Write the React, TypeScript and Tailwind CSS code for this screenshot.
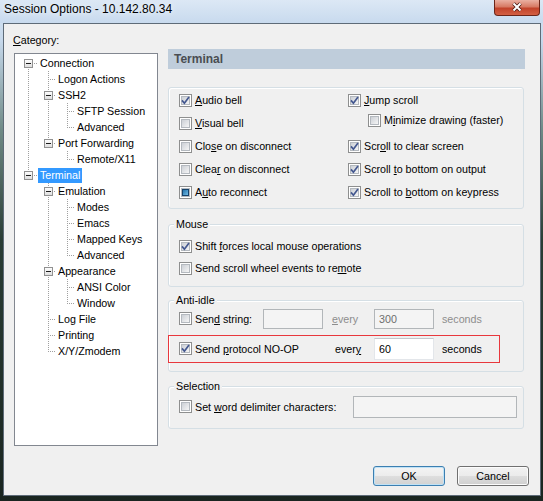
import React from 'react';

type Node = { label: string; children?: Node[] };
type Row = { label: string; depth: number; hasChildren: boolean; hasNext: boolean; first: boolean; guides: boolean[] };
type CheckState = 'on' | 'off' | 'mixed';

const tree: Node[] = [
  {
    label: 'Connection',
    children: [
      { label: 'Logon Actions' },
      { label: 'SSH2', children: [{ label: 'SFTP Session' }, { label: 'Advanced' }] },
      { label: 'Port Forwarding', children: [{ label: 'Remote/X11' }] },
    ],
  },
  {
    label: 'Terminal',
    children: [
      {
        label: 'Emulation',
        children: [{ label: 'Modes' }, { label: 'Emacs' }, { label: 'Mapped Keys' }, { label: 'Advanced' }],
      },
      { label: 'Appearance', children: [{ label: 'ANSI Color' }, { label: 'Window' }] },
      { label: 'Log File' },
      { label: 'Printing' },
      { label: 'X/Y/Zmodem' },
    ],
  },
];

const flatten = (nodes: Node[], depth: number, guides: boolean[], out: Row[]): Row[] => {
  nodes.forEach((n, i) => {
    const hasNext = i < nodes.length - 1;
    out.push({
      label: n.label,
      depth,
      hasChildren: !!n.children,
      hasNext,
      first: depth === 0 && i === 0,
      guides,
    });
    if (n.children) flatten(n.children, depth + 1, [...guides, hasNext], out);
  });
  return out;
};

const rows = flatten(tree, 0, [], []);

// connector x per depth (pixel centre inside the tree) and width of the guide column
const cx = [13.5, 33.5, 52.5];
const guideW = [23, 41, 60];

// label with an accelerator letter underlined
const acc = (s: string, i: number) => (
  <>
    {s.slice(0, i)}
    <u>{s[i]}</u>
    {s.slice(i + 1)}
  </>
);

const dot = { stroke: '#a0a0a0', strokeWidth: 1, strokeDasharray: '1 1', shapeRendering: 'crispEdges' as const };

const TreeRow = ({ row }: { row: Row }) => {
  const w = guideW[row.depth];
  const c = cx[row.depth];
  const selected = row.label === 'Terminal';
  return (
    <div className="flex h-[16px] items-center">
      <svg width={w} height={16} className="shrink-0">
        {row.guides.map((g, a) => (g ? <line key={a} x1={cx[a]} y1={0} x2={cx[a]} y2={16} {...dot} /> : null))}
        {!row.first && <line x1={c} y1={0} x2={c} y2={8} {...dot} />}
        {row.hasNext && <line x1={c} y1={8} x2={c} y2={16} {...dot} />}
        <line x1={c - 0.5} y1={8.5} x2={w} y2={8.5} {...dot} />
        {row.hasChildren && (
          <>
            <defs>
              <linearGradient id="tvBox" x1="0" y1="0" x2="0" y2="1">
                <stop offset="0" stopColor="#ffffff" />
                <stop offset="1" stopColor="#dcdcdc" />
              </linearGradient>
            </defs>
            <rect x={c - 4} y={4.5} width={8} height={8} fill="url(#tvBox)" stroke="#919191" shapeRendering="crispEdges" />
            <line x1={c - 2.5} y1={8.5} x2={c + 2.5} y2={8.5} stroke="#1c1c1c" shapeRendering="crispEdges" />
          </>
        )}
      </svg>
      <span
        className={`h-[15px] px-[2px] leading-[15px] whitespace-nowrap ${
          selected ? 'bg-[#3399ff] text-white' : 'text-black'
        }`}
      >
        {row.label}
      </span>
    </div>
  );
};

const Check = ({ state }: { state: CheckState }) => (
  <svg width="13" height="13" viewBox="0 0 13 13" className="shrink-0">
    <defs>
      <linearGradient id="cbFill" x1="0" y1="0" x2="1" y2="1">
        <stop offset="0" stopColor="#c9cdd3" />
        <stop offset="1" stopColor="#f8f8f8" />
      </linearGradient>
      <linearGradient id="cbMix" x1="0" y1="0" x2="1" y2="1">
        <stop offset="0" stopColor="#1d6aa3" />
        <stop offset="1" stopColor="#78c4ec" />
      </linearGradient>
    </defs>
    <rect x="0.5" y="0.5" width="12" height="12" fill="#fff" stroke="#8e8f8f" shapeRendering="crispEdges" />
    <rect x="2.5" y="2.5" width="8" height="8" fill="url(#cbFill)" stroke="#b4b9bf" shapeRendering="crispEdges" />
    {state === 'on' && <path d="M3 6.4 L5.4 9.2 L10 3" fill="none" stroke="#43578f" strokeWidth="1.7" />}
    {state === 'mixed' && (
      <rect x="3.5" y="3.5" width="6" height="6" fill="url(#cbMix)" stroke="#17436b" shapeRendering="crispEdges" />
    )}
  </svg>
);

const CheckItem = ({ state = 'off', children }: { state?: CheckState; children: React.ReactNode }) => (
  <div className="flex items-center gap-[3px] whitespace-nowrap">
    <Check state={state} />
    <span>{children}</span>
  </div>
);

const Field = ({ w, h, value, disabled }: { w: string; h: string; value?: string; disabled?: boolean }) => (
  <div
    className={`${w} ${h} flex shrink-0 items-center border pl-[4px] ${
      disabled
        ? 'border-[#b2b6b9] bg-[#f4f4f4] text-[#6d6d6d]'
        : 'border-[#e3e6ea] border-t-[#c4c7cc] bg-white text-black'
    }`}
  >
    {value}
  </div>
);

const Group = ({ title, className, children }: { title?: string; className?: string; children: React.ReactNode }) => (
  <div className={`rounded-[3px] border border-[#d5dfe5] shadow-[inset_1px_1px_0_#fff] ${className ?? ''}`}>
    {title && <div className="-mt-[8px] ml-[5px] h-[14px] w-fit bg-[#f0f0f0] px-[2px] leading-[14px]">{title}</div>}
    {children}
  </div>
);

const App: React.FC = () => {
  return (
    <div className="flex h-[501px] w-[543px] flex-col overflow-hidden bg-[linear-gradient(180deg,#d6e4f2_0px,#c7d9ec_40px,#6f8a86_130px,#2a3d35_240px,#1a2520_100%)] font-['Liberation_Sans',Arial,sans-serif]">
      {/* Title bar */}
      <div className="flex h-[23px] shrink-0 items-start bg-[linear-gradient(180deg,#dce8f5,#c8daee)]">
        <div className="pl-[4px] pt-[2px] text-[12px] leading-[14px] text-black [text-shadow:0_0_6px_#fff]">
          Session Options - 10.142.80.34
        </div>
        <div className="mr-[3px] ml-auto flex h-[16px] w-[46px] items-center justify-center rounded-b-[4px] border border-t-0 border-[#6b2519] bg-[linear-gradient(180deg,#eab0a2_0%,#d77a64_45%,#c2432b_55%,#d35f43_100%)] pb-[2px]">
          <svg width="12" height="10" viewBox="0 0 12 10">
            <path d="M2.5 1.5 L9.5 8.5 M9.5 1.5 L2.5 8.5" stroke="#4a1a12" strokeWidth="3.6" />
            <path d="M2.5 1.5 L9.5 8.5 M9.5 1.5 L2.5 8.5" stroke="#fff" strokeWidth="2" />
          </svg>
        </div>
      </div>

      {/* Client area */}
      <div className="mr-[2px] ml-[3px] flex h-[473px] shrink-0 flex-col border border-[#5e6b78] bg-[#f0f0f0] pt-[8px] pl-[10px] text-[10.7px] text-black">
        <div className="flex items-start">
          <div className="w-[144px] shrink-0">
            <div className="-ml-[1px] h-[16px] leading-[16px]">{acc('Category:', 0)}</div>
            <div className="mt-[5px] h-[393px] border border-[#828790] bg-white pt-[1px]">
              {rows.map((r, i) => (
                <TreeRow key={i} row={r} />
              ))}
            </div>
          </div>

          <div className="mt-[17px] ml-[10px] w-[357px]">
            <div className="flex h-[20px] items-center bg-[#bfcddb] pl-[6px] text-[12px] font-bold text-[#4a4d52]">
              Terminal
            </div>

            <Group className="mt-[18px] w-[356px] pt-[1px] pb-[4px]">
              <div className="grid grid-cols-[169px_1fr] pl-[10px] [&>div]:h-[23px]">
                <CheckItem state="on">{acc('Audio bell', 0)}</CheckItem>
                <CheckItem state="on">{acc('Jump scroll', 0)}</CheckItem>
                <CheckItem>{acc('Visual bell', 0)}</CheckItem>
                <div className="pl-[20px]">
                  <CheckItem>{acc('Minimize drawing (faster)', 1)}</CheckItem>
                </div>
                <CheckItem>{acc('Close on disconnect', 3)}</CheckItem>
                <CheckItem state="on">{acc('Scroll to clear screen', 3)}</CheckItem>
                <CheckItem>{acc('Clear on disconnect', 4)}</CheckItem>
                <CheckItem state="on">{acc('Scroll to bottom on output', 7)}</CheckItem>
                <CheckItem state="mixed">{acc('Auto reconnect', 1)}</CheckItem>
                <CheckItem state="on">{acc('Scroll to bottom on keypress', 10)}</CheckItem>
              </div>
            </Group>

            <Group title="Mouse" className="mt-[15px] w-[356px] pb-[7px]">
              <div className="mt-[4px] pl-[10px] [&>div]:h-[22px]">
                <CheckItem state="on">{acc('Shift forces local mouse operations', 6)}</CheckItem>
                <CheckItem>{acc('Send scroll wheel events to remote', 30)}</CheckItem>
              </div>
            </Group>

            <Group title="Anti-idle" className="mt-[13px] w-[356px] pb-[8px]">
              <div className="mt-[1px] flex h-[22px] items-center pl-[10px]">
                <div className="w-[84px] shrink-0">
                  <CheckItem>{acc('Send string:', 3)}</CheckItem>
                </div>
                <Field w="w-[60px]" h="h-[20px]" disabled />
                <div className="ml-[9px] w-[42px] shrink-0 text-[#8d8d8d]">{acc('every', 0)}</div>
                <Field w="w-[60px]" h="h-[20px]" value="300" disabled />
                <div className="ml-[8px] text-[#8d8d8d]">seconds</div>
              </div>
              <div className="mt-[5px] -ml-[1px] flex h-[28px] w-[332px] items-center border border-[#e8383d] pl-[10px]">
                <div className="w-[156px] shrink-0">
                  <CheckItem state="on">{acc('Send protocol NO-OP', 5)}</CheckItem>
                </div>
                <div className="w-[39px] shrink-0">{acc('every', 4)}</div>
                <Field w="w-[60px]" h="h-[22px]" value="60" />
                <div className="ml-[8px]">seconds</div>
              </div>
            </Group>

            <Group title="Selection" className="mt-[14px] w-[356px] pb-[10px]">
              <div className="mt-[3px] flex h-[22px] items-center pl-[10px]">
                <div className="w-[174px] shrink-0">
                  <CheckItem>{acc('Set word delimiter characters:', 4)}</CheckItem>
                </div>
                <Field w="w-[164px]" h="h-[22px]" disabled />
              </div>
            </Group>
          </div>
        </div>

        <div className="mt-[20px] flex justify-end gap-[12px] pr-[11px]">
          <div className="flex h-[20px] w-[72px] items-center justify-center rounded-[3px] border border-[#3c7fb1] bg-[linear-gradient(180deg,#f4f4f4_0%,#ececec_50%,#dedede_50%,#d2d2d2_100%)] shadow-[inset_0_0_0_1px_#c0e2f6]">
            OK
          </div>
          <div className="flex h-[20px] w-[72px] items-center justify-center rounded-[3px] border border-[#707070] bg-[linear-gradient(180deg,#f2f2f2_0%,#ebebeb_50%,#dddddd_50%,#cfcfcf_100%)] shadow-[inset_0_0_0_1px_#fcfcfc]">
            Cancel
          </div>
        </div>
      </div>
    </div>
  );
};

export default App;
